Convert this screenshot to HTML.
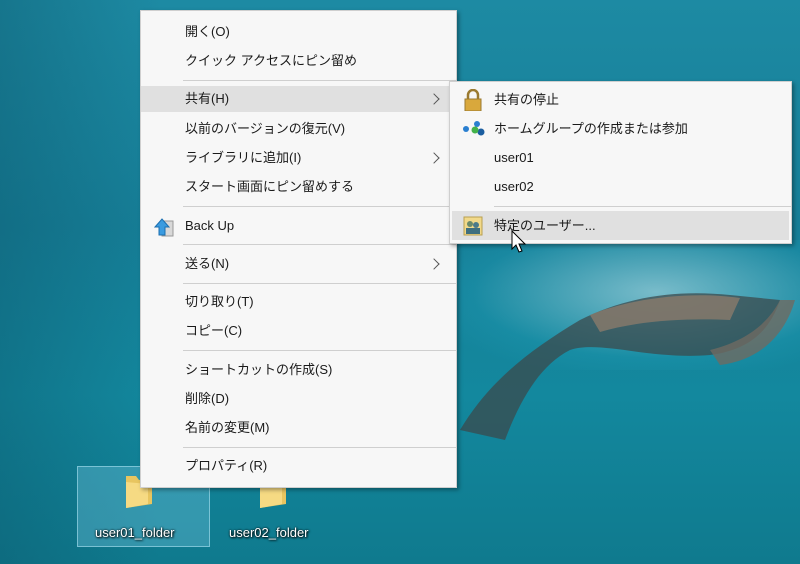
<!DOCTYPE html>
<html><head><meta charset="utf-8"><style>
html,body{margin:0;padding:0}
body{width:800px;height:564px;position:relative;overflow:hidden;
background:linear-gradient(180deg,#1d8aa3 0%,#167e97 40%,#13889e 70%,#0f7a8e 100%);
font-family:"Liberation Sans","Noto Sans CJK JP",sans-serif;}
.bg1{position:absolute;left:440px;top:240px;width:360px;height:130px;background:radial-gradient(ellipse at 60% 40%,rgba(220,245,250,.5),rgba(40,170,195,.2) 60%,transparent 80%)}
.bg2{position:absolute;left:0;top:0;width:160px;height:564px;background:linear-gradient(90deg,rgba(10,80,100,.35),transparent)}
.menu{position:absolute;background:#f7f7f7;border:1px solid #cfcfcf;box-shadow:2px 2px 4px rgba(0,0,0,.35)}
.it{position:absolute;left:0;right:0;height:26px;font-size:13px;color:#1a1a1a;line-height:26px}
.it span{position:absolute;left:44px}
.hl{background:#e0e0e0}
.sep{position:absolute;height:1px;background:#cfcfcf}
.arr{position:absolute;right:18px;top:9px;width:7px;height:7px;border-right:1.3px solid #555;border-top:1.3px solid #555;transform:rotate(45deg)}
.lbl{position:absolute;color:#fff;font-size:13px;text-shadow:1px 1px 2px #000,0 0 2px #000}
</style></head><body>
<div class="bg2"></div>
<div class="bg1"></div>
<svg style="position:absolute;left:450px;top:240px" width="350" height="200">
<path d="M10 190 C40 140 80 110 130 80 C180 55 230 50 280 55 L330 60 C320 90 300 110 260 115 C200 120 150 100 120 110 C90 125 70 160 55 200 Z" fill="#3b4a4c" opacity=".75"/>
<path d="M140 75 C190 55 250 52 290 58 L280 80 C240 78 190 80 150 92 Z" fill="#8a7a6c" opacity=".8"/>
<path d="M260 110 C300 100 320 80 330 60 L345 60 C335 95 310 120 270 125 Z" fill="#6f6a62" opacity=".8"/>
</svg>
<div style="position:absolute;left:77px;top:466px;width:131px;height:79px;background:rgba(120,200,225,.35);border:1px solid rgba(170,225,240,.6)"></div>
<svg style="position:absolute;left:122px;top:472px" width="34" height="40"><path d="M4 4 L14 4 L17 8 L30 8 L30 32 L4 36 Z" fill="#e8c560"/><path d="M4 10 L26 12 L26 32 L4 36 Z" fill="#f6da83"/></svg>
<svg style="position:absolute;left:256px;top:472px" width="34" height="40"><path d="M4 4 L14 4 L17 8 L30 8 L30 32 L4 36 Z" fill="#e8c560"/><path d="M4 10 L26 12 L26 32 L4 36 Z" fill="#f6da83"/></svg>
<div class="lbl" style="left:95px;top:525px">user01_folder</div>
<div class="lbl" style="left:229px;top:525px">user02_folder</div>

<div class="menu" style="left:140px;top:10px;width:315px;height:476px">
<div class="it" style="top:8px"><span>開く(O)</span></div>
<div class="it" style="top:37px"><span>クイック アクセスにピン留め</span></div>
<div class="sep" style="left:42px;right:0;top:69px"></div>
<div class="it hl" style="top:75px"><span>共有(H)</span><div class="arr"></div></div>
<div class="it" style="top:105px"><span>以前のバージョンの復元(V)</span></div>
<div class="it" style="top:134px"><span>ライブラリに追加(I)</span><div class="arr"></div></div>
<div class="it" style="top:163px"><span>スタート画面にピン留めする</span></div>
<div class="sep" style="left:42px;right:0;top:195px"></div>
<div class="it" style="top:202px"><svg style="position:absolute;left:12px;top:3px" width="22" height="22"><rect x="9" y="5" width="11" height="15" fill="#d8d8d8" stroke="#999"/><path d="M2 11 L9 3 L16 11 L12 11 L12 19 L6 19 L6 11 Z" fill="#3a9be0" stroke="#1b6fb0"/></svg><span>Back Up</span></div>
<div class="sep" style="left:42px;right:0;top:233px"></div>
<div class="it" style="top:240px"><span>送る(N)</span><div class="arr"></div></div>
<div class="sep" style="left:42px;right:0;top:272px"></div>
<div class="it" style="top:278px"><span>切り取り(T)</span></div>
<div class="it" style="top:307px"><span>コピー(C)</span></div>
<div class="sep" style="left:42px;right:0;top:339px"></div>
<div class="it" style="top:346px"><span>ショートカットの作成(S)</span></div>
<div class="it" style="top:375px"><span>削除(D)</span></div>
<div class="it" style="top:404px"><span>名前の変更(M)</span></div>
<div class="sep" style="left:42px;right:0;top:436px"></div>
<div class="it" style="top:442px"><span>プロパティ(R)</span></div>
</div>

<div class="menu" style="left:449px;top:81px;width:341px;height:161px">
<div class="it" style="top:5px"><svg style="position:absolute;left:12px;top:2px" width="22" height="22"><path d="M6 10 V6 a5 5 0 0 1 10 0 V10" fill="none" stroke="#9a7a30" stroke-width="2.5"/><rect x="3" y="10" width="16" height="12" fill="#d9a83c" stroke="#9a7a30"/></svg><span>共有の停止</span></div>
<div class="it" style="top:34px"><svg style="position:absolute;left:12px;top:3px" width="24" height="20"><circle cx="4" cy="10" r="3" fill="#2a7fd0"/><circle cx="15" cy="5" r="3" fill="#2a7fd0"/><circle cx="19" cy="13" r="3.5" fill="#1b5ea0"/><circle cx="13" cy="11" r="3.5" fill="#43b24a"/></svg><span>ホームグループの作成または参加</span></div>
<div class="it" style="top:63px"><span>user01</span></div>
<div class="it" style="top:92px"><span>user02</span></div>
<div class="sep" style="left:44px;right:0;top:124px"></div>
<div class="it hl" style="top:129px;height:29px;line-height:29px;left:2px;right:2px"><svg style="position:absolute;left:11px;top:5px" width="20" height="20"><rect x="1" y="1" width="18" height="18" fill="#f1d98a" stroke="#b9a050"/><circle cx="7" cy="8" r="3" fill="#6a8a6a"/><circle cx="13" cy="9" r="3" fill="#4a7a8a"/><rect x="3" y="12" width="14" height="6" fill="#3f6f7f"/></svg><span style="left:42px">特定のユーザー...</span></div>
</div>
<svg style="position:absolute;left:510px;top:230px" width="20" height="26"><path d="M2 1 L2 19 L6 15 L9 22 L12 21 L9 14 L15 14 Z" fill="#fff" stroke="#000" stroke-width="1"/></svg>
</body></html>
